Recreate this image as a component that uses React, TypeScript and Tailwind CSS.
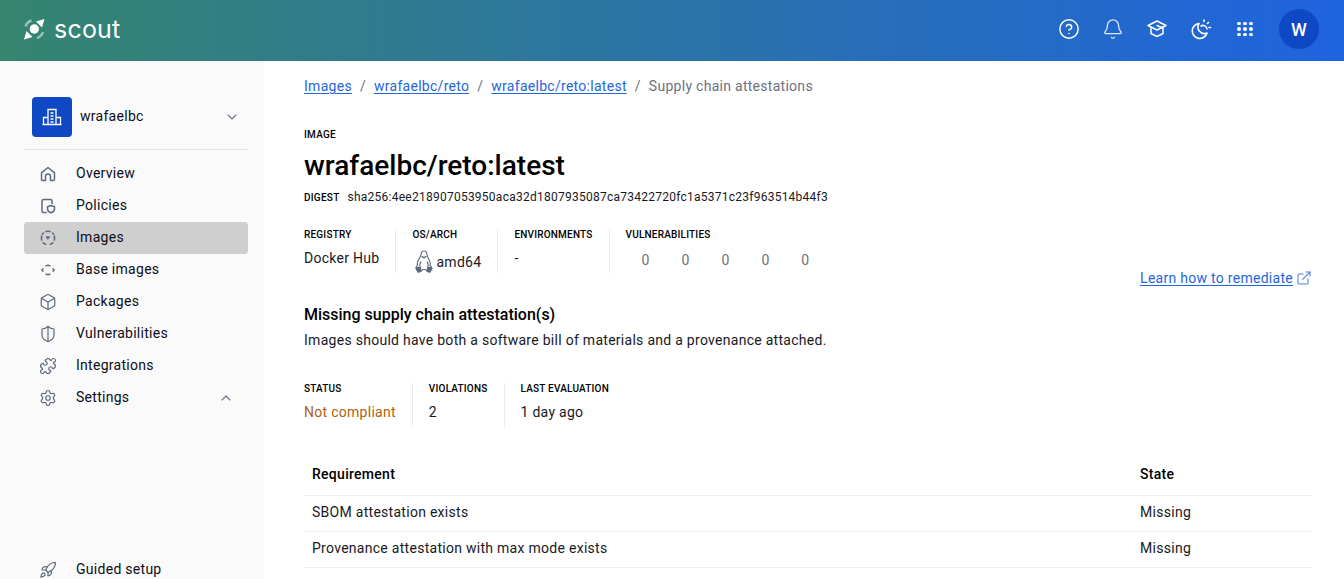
import {
  Bell,
  Box,
  ChevronDown,
  ChevronUp,
  CircleHelp,
  ExternalLink,
  Puzzle,
  Rocket,
  Settings,
  ShieldHalf,
} from "lucide-react";
import type { ReactNode } from "react";

const iconProps = { size: 18, strokeWidth: 1.6 };

function HomeIcon() {
  return (
    <svg width="18" height="18" viewBox="0 0 18 18" fill="none" stroke="currentColor" strokeWidth="1.5" strokeLinejoin="round">
      <path d="M2.500 7.800 9 2.500l6.500 5.300v6.400a1.300 1.300 0 0 1-1.300 1.300h-2.700v-4a2.500 2.500 0 0 0-5 0v4H3.800a1.300 1.300 0 0 1-1.300-1.300z" />
    </svg>
  );
}

function PolicyIcon() {
  return (
    <svg width="18" height="18" viewBox="0 0 18 18" fill="none" stroke="currentColor" strokeWidth="1.5" strokeLinecap="round" strokeLinejoin="round">
      <path d="M7 15.500H4.500A1.500 1.500 0 0 1 3 14V4a1.500 1.500 0 0 1 1.500-1.500h7A1.500 1.500 0 0 1 13 4v2.500" />
      <path d="M12 8.500l3.500 1.200v2.300c0 1.900-1.500 3.200-3.500 3.800-2-.6-3.500-1.900-3.500-3.800V9.700z" />
    </svg>
  );
}

function ImagesIcon() {
  return (
    <svg width="18" height="18" viewBox="0 0 18 18" fill="none" stroke="currentColor" strokeWidth="1.600" strokeLinecap="round">
      <path d="M7 2.600a6.700 6.700 0 0 1 4 0" />
      <path d="M2.700 7a6.700 6.700 0 0 0 0 4" />
      <path d="M15.300 7a6.700 6.700 0 0 1 0 4" />
      <path d="M4.200 13.900A6.700 6.700 0 0 0 6.500 15.200" />
      <path d="M13.800 13.900a6.700 6.700 0 0 1-2.300 1.300" />
      <path d="M4.200 4.100a6.700 6.700 0 0 0-.8.9" />
      <path d="M13.800 4.100a6.700 6.700 0 0 1 .8.9" />
      <path d="M7.500 7.800h3L9 10z" fill="currentColor" strokeWidth="1" />
    </svg>
  );
}

function BaseImagesIcon() {
  return (
    <svg width="18" height="18" viewBox="0 0 18 18" fill="none" stroke="currentColor" strokeWidth="1.500" strokeLinecap="round" strokeLinejoin="round">
      <path d="M7 4.800a4.500 4.500 0 0 1 4 0" />
      <path d="M7 13.200a4.500 4.500 0 0 0 4 0" />
      <path d="M4 7.800 2.800 9 4 10.200" />
      <path d="M14 7.800 15.200 9 14 10.200" />
    </svg>
  );
}

function NavItem({ icon, label, active, trailing }: { icon: ReactNode; label: string; active?: boolean; trailing?: ReactNode }) {
  return (
    <div className={`flex h-8 items-center rounded pl-[15px] pr-[14px] ${active ? "bg-[#cfcfcf]" : ""}`}>
      <span className="flex w-[37px] shrink-0 text-[#5f6a7a]">{icon}</span>
      <span className="flex-1 pb-[2px] text-[14px] tracking-[0.28px] text-[#0b0f19]">{label}</span>
      {trailing}
    </div>
  );
}

function Meta({ label, children }: { label: string; children: ReactNode }) {
  return (
    <div className="flex h-[46px] flex-col">
      <span className="text-[10px] leading-[12px] font-medium tracking-[0.2px] text-black uppercase">{label}</span>
      <div className="mt-[7px] flex items-center text-[14px] leading-[20px] tracking-[0.28px] text-[#17191e]">{children}</div>
    </div>
  );
}

function Divider() {
  return <div className="mx-4 h-[44px] w-px bg-[#ebebeb]" />;
}

function Crumb({ children }: { children: ReactNode }) {
  return <span className="text-[#2465dd] underline underline-offset-2">{children}</span>;
}

export default function App() {
  return (
    <div className="flex h-screen flex-col overflow-hidden bg-white font-['Roboto',sans-serif]">
      <header className="flex h-[61px] shrink-0 items-center bg-linear-to-r/srgb from-[#35856f] to-[#1f63e0] pr-[25px] pb-[3px] pl-6">
        <svg width="21" height="21" viewBox="0 0 21 21" className="shrink-0">
          <circle cx="10.300" cy="10" r="4.700" fill="white" />
          <path d="M0 20.500l2.500-8.500 6 6z" fill="white" />
          <path d="M20.500 0l-2.500 8.500-6-6z" fill="white" />
          <path d="M1.500 7.500A9 9 0 0 1 7.500 1.500" stroke="white" strokeOpacity="0.5" strokeWidth="2.500" fill="none" />
          <path d="M19 13A9 9 0 0 1 13 19" stroke="white" strokeOpacity="0.5" strokeWidth="2.500" fill="none" />
        </svg>
        <span className="ml-[9px] font-['Inter',sans-serif] text-[25px] leading-[30px] font-normal tracking-[0.2px] text-white">scout</span>
        <div className="ml-auto flex items-center text-white">
          <div className="flex items-center gap-5">
            <span className="flex w-6 justify-center">
              <CircleHelp size={22} strokeWidth={1.6} />
            </span>
            <span className="flex w-6 justify-center">
              <Bell size={22} strokeWidth={1.4} className="opacity-85" />
            </span>
            <span className="flex w-6 justify-center">
              <svg width="20" height="18" viewBox="0 0 20 18" fill="none" stroke="currentColor" strokeWidth="1.500" strokeLinejoin="round" strokeLinecap="round">
                <path d="M10 1 19 5.500 10 10 1 5.500z" />
                <path d="M4 7.500v6l6 3 6-3v-6" />
                <path d="M10 5.500l5.500 2.500" />
              </svg>
            </span>
            <span className="flex w-6 justify-center">
              <svg width="22" height="22" viewBox="0 0 22 22" fill="none" stroke="currentColor" strokeWidth="1.600" strokeLinecap="round" strokeLinejoin="round">
                <path d="M9 5.500a7.500 7.500 0 1 0 8 9.500 6.500 6.500 0 0 1-8-9.500z" />
                <path d="M11 8a4 4 0 0 1 6 3" />
                <path d="M14 2v1.500M18.500 4.500l-1 1M20.500 9.500h-1.500" />
              </svg>
            </span>
            <span className="flex w-6 justify-center">
              <span className="grid w-[16px] grid-cols-3 gap-[2px]">
                {[...Array(9)].map((_, i) => (
                  <span key={i} className="size-[3.600px] rounded-full bg-white" />
                ))}
              </span>
            </span>
          </div>
          <div className="ml-[22px] flex size-10 items-center justify-center rounded-full bg-[#0e48c4] text-[18px] font-medium">W</div>
        </div>
      </header>

      <div className="flex min-h-0 flex-1">
        <aside className="flex w-[264px] shrink-0 flex-col bg-[#fafafa] pt-9 pr-4 pl-6">
          <div className="flex h-[53px] items-start border-b border-[#e4e4e4] pr-2 pl-2">
            <div className="flex size-10 shrink-0 items-center justify-center rounded bg-[#0e48c4]">
              <svg width="20" height="18" viewBox="0 0 20 18" fill="none" stroke="white" strokeWidth="1.300">
                <path d="M1.500 16.500v-7h4.500M18.500 16.500v-7H14M6 16.500V1.500h8v15M.5 16.500h19" />
                <path d="M8.500 5h3M8.500 8h3M8.500 11h3M8.500 14h3" />
              </svg>
            </div>
            <span className="ml-2 flex h-10 flex-1 items-center pb-[2px] text-[14px] tracking-[0.28px] text-[#0b0f19]">wrafaelbc</span>
            <span className="flex h-10 items-center">
              <ChevronDown size={16} className="text-[#6b7687]" strokeWidth={1.6} />
            </span>
          </div>
          <nav className="mt-[8px] flex flex-col">
            <NavItem icon={<HomeIcon />} label="Overview" />
            <NavItem icon={<PolicyIcon />} label="Policies" />
            <NavItem icon={<ImagesIcon />} label="Images" active />
            <NavItem icon={<BaseImagesIcon />} label="Base images" />
            <NavItem icon={<Box {...iconProps} />} label="Packages" />
            <NavItem icon={<ShieldHalf {...iconProps} />} label="Vulnerabilities" />
            <NavItem icon={<Puzzle {...iconProps} />} label="Integrations" />
            <NavItem icon={<Settings {...iconProps} />} label="Settings" trailing={<ChevronUp size={16} className="text-[#6b7687]" strokeWidth={1.6} />} />
          </nav>
          <div className="mt-auto -mb-[7px]">
            <NavItem icon={<Rocket {...iconProps} />} label="Guided setup" />
          </div>
        </aside>

        <main className="min-w-0 flex-1 pt-[15px] pr-8 pl-10">
          <div className="flex items-center gap-2 text-[14px] leading-[20px] tracking-[0.28px] text-[#6b7280]">
            <Crumb>Images</Crumb>
            <span>/</span>
            <Crumb>wrafaelbc/reto</Crumb>
            <span>/</span>
            <Crumb>wrafaelbc/reto:latest</Crumb>
            <span>/</span>
            <span>Supply chain attestations</span>
          </div>

          <div className="mt-[33px] text-[10px] leading-[12px] font-medium tracking-[0.25px] text-black uppercase">Image</div>
          <h1 className="mt-[7px] text-[28px] leading-[36px] font-medium text-black">wrafaelbc/reto:latest</h1>
          <div className="mt-[5px] flex items-baseline gap-2 leading-[16px]">
            <span className="text-[10px] font-medium tracking-[0.25px] text-black">DIGEST</span>
            <span className="text-[12px] tracking-[0.25px] text-[#17191e]">sha256:4ee218907053950aca32d1807935087ca73422720fc1a5371c23f963514b44f3</span>
          </div>

          <div className="mt-[23px] flex h-[60px] items-start">
            <Meta label="Registry">Docker Hub</Meta>
            <Divider />
            <Meta label="OS/Arch">
              <span className="mt-[2px] flex items-center">
                <svg width="18" height="23" viewBox="0 0 18 23" className="mr-[3px] ml-[3px] text-[#5f6a7a]" fill="none" stroke="currentColor" strokeWidth="1.100" strokeLinejoin="round">
                  <path d="M9 1c2.200 0 3 1.700 3 3.500 0 2.500 1.500 3.500 2.500 6 .6 1.500.9 3.200.4 4.500l1.800 2.500c.4 1-2.500 2-4 3-1 .5-2-.5-2.200-1H7.500c-.5 1-1.500 1.500-2.500 1-1.500-1-4.500-2-4-3l1.500-2.500c-.5-1.500 0-3.200.7-4.500C4 8 6 7 6 4.500 6 2.700 6.800 1 9 1z" />
                  <path d="M7 6.500c1 1 3 1 4 0L9 8z" fill="currentColor" />
                  <path d="M5.500 18c-1-2-.8-4.500.5-6.500M12.500 18c1-2 .8-4.500-.5-6.500" />
                  <path d="M1 18.500c1.500-1.500 3-1.500 4.500-.5l.5 3.500-3 .8zM17 18.500c-1.500-1.500-3-1.500-4.500-.5l-.5 3.500 3 .8z" fill="currentColor" />
                </svg>
                amd64
              </span>
            </Meta>
            <Divider />
            <Meta label="Environments">-</Meta>
            <Divider />
            <Meta label="Vulnerabilities">
              <div className="mt-[2px] ml-4 flex w-[169px] justify-between pr-[1px] text-[#6a7280]">
                <span>0</span>
                <span>0</span>
                <span>0</span>
                <span>0</span>
                <span>0</span>
              </div>
            </Meta>
            <a className="mt-[39px] ml-auto flex items-center gap-[3px] text-[14px] leading-[20px] tracking-[0.28px] text-[#2465dd]">
              <span className="underline underline-offset-2">Learn how to remediate</span>
              <ExternalLink size={16} strokeWidth={1.6} className="opacity-80" />
            </a>
          </div>

          <h2 className="mt-[14px] text-[16px] leading-[24px] font-medium text-black">Missing supply chain attestation(s)</h2>
          <p className="mt-[3px] text-[14px] leading-[20px] tracking-[0.28px] text-[#17191e]">Images should have both a software bill of materials and a provenance attached.</p>

          <div className="mt-[33px] flex items-start">
            <Meta label="Status">
              <span className="text-[#b0610b]">Not compliant</span>
            </Meta>
            <Divider />
            <Meta label="Violations">2</Meta>
            <Divider />
            <Meta label="Last evaluation">1 day ago</Meta>
          </div>

          <table className="mt-[24px] w-full text-[14px] tracking-[0.28px] text-[#17191e]">
            <thead>
              <tr className="h-[42px] border-b border-[#efefef] text-left">
                <th className="pt-[2px] pl-2 font-medium text-black">Requirement</th>
                <th className="w-[172px] pt-[2px] font-medium text-black">State</th>
              </tr>
            </thead>
            <tbody>
              <tr className="h-9 border-b border-[#efefef]">
                <td className="pb-[2px] pl-2">SBOM attestation exists</td>
                <td className="pb-[2px]">Missing</td>
              </tr>
              <tr className="h-9 border-b border-[#efefef]">
                <td className="pb-[2px] pl-2">Provenance attestation with max mode exists</td>
                <td className="pb-[2px]">Missing</td>
              </tr>
            </tbody>
          </table>
        </main>
      </div>
    </div>
  );
}
